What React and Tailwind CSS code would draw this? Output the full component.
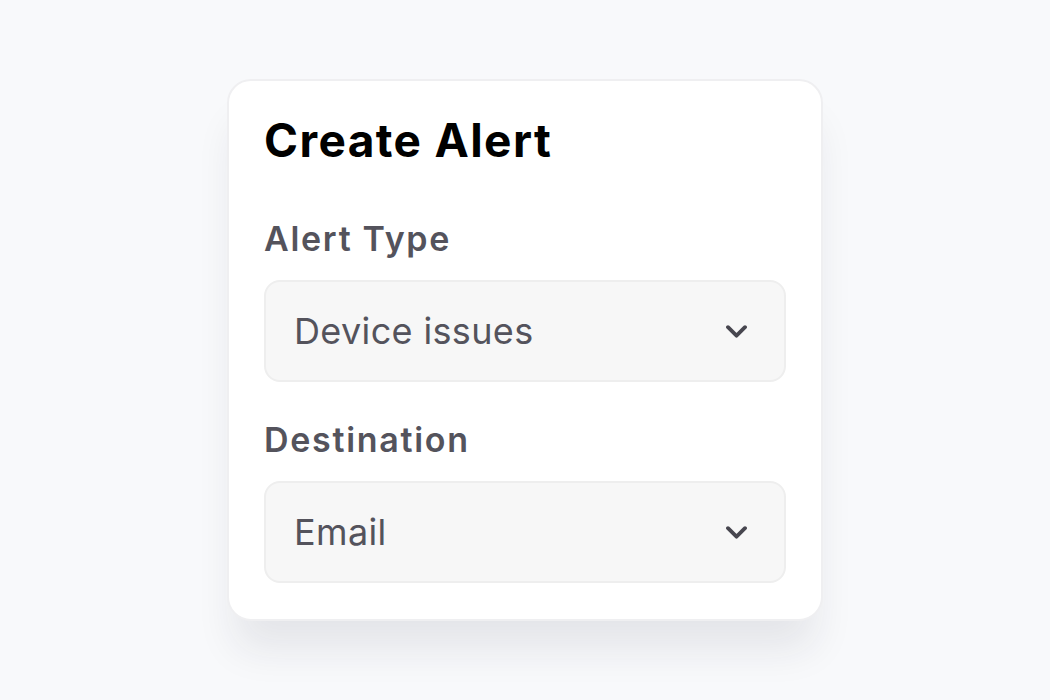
const FIELDS = [
  { label: "Alert Type", value: "Device issues" },
  { label: "Destination", value: "Email" },
];

function Chevron() {
  return (
    <svg
      width="21"
      height="13"
      viewBox="0 0 21 13"
      fill="none"
      stroke="currentColor"
      strokeWidth="3.8"
      strokeLinecap="round"
      strokeLinejoin="round"
    >
      <path d="M2 2.2l8.5 8.5 8.5-8.5" />
    </svg>
  );
}

function SelectField({ label, value }) {
  return (
    <div className="flex flex-col">
      <label className="text-[34px] leading-[40px] font-semibold tracking-[0.05em] text-[#54535c] mb-[21px]">
        {label}
      </label>
      <div className="flex items-center justify-between h-[102px] pl-[28px] pr-[37px] rounded-2xl bg-[#f7f7f7] border-2 border-[#eeeeee] text-[#54535c]">
        <span className="text-[36px] leading-[40px] tracking-[0.01em]">{value}</span>
        <span className="text-[#47464f]">
          <Chevron />
        </span>
      </div>
    </div>
  );
}

export default function App() {
  return (
    <div
      className="w-full h-[700px] bg-[#f8f9fb] flex items-center justify-center"
      style={{ fontFamily: "Inter, 'Noto Sans', sans-serif" }}
    >
      <div className="w-[596px] bg-white border-2 border-[#efeff1] rounded-[24px] px-[35px] pt-[34px] pb-[36px] shadow-[0_36px_40px_-8px_rgba(30,35,60,0.09)]">
        <h1 className="text-[46px] leading-[50px] font-bold tracking-[0.03em] text-black mb-[54px]">
          Create Alert
        </h1>
        <div className="flex flex-col gap-[38px]">
          {FIELDS.map((f) => (
            <SelectField key={f.label} label={f.label} value={f.value} />
          ))}
        </div>
      </div>
    </div>
  );
}
